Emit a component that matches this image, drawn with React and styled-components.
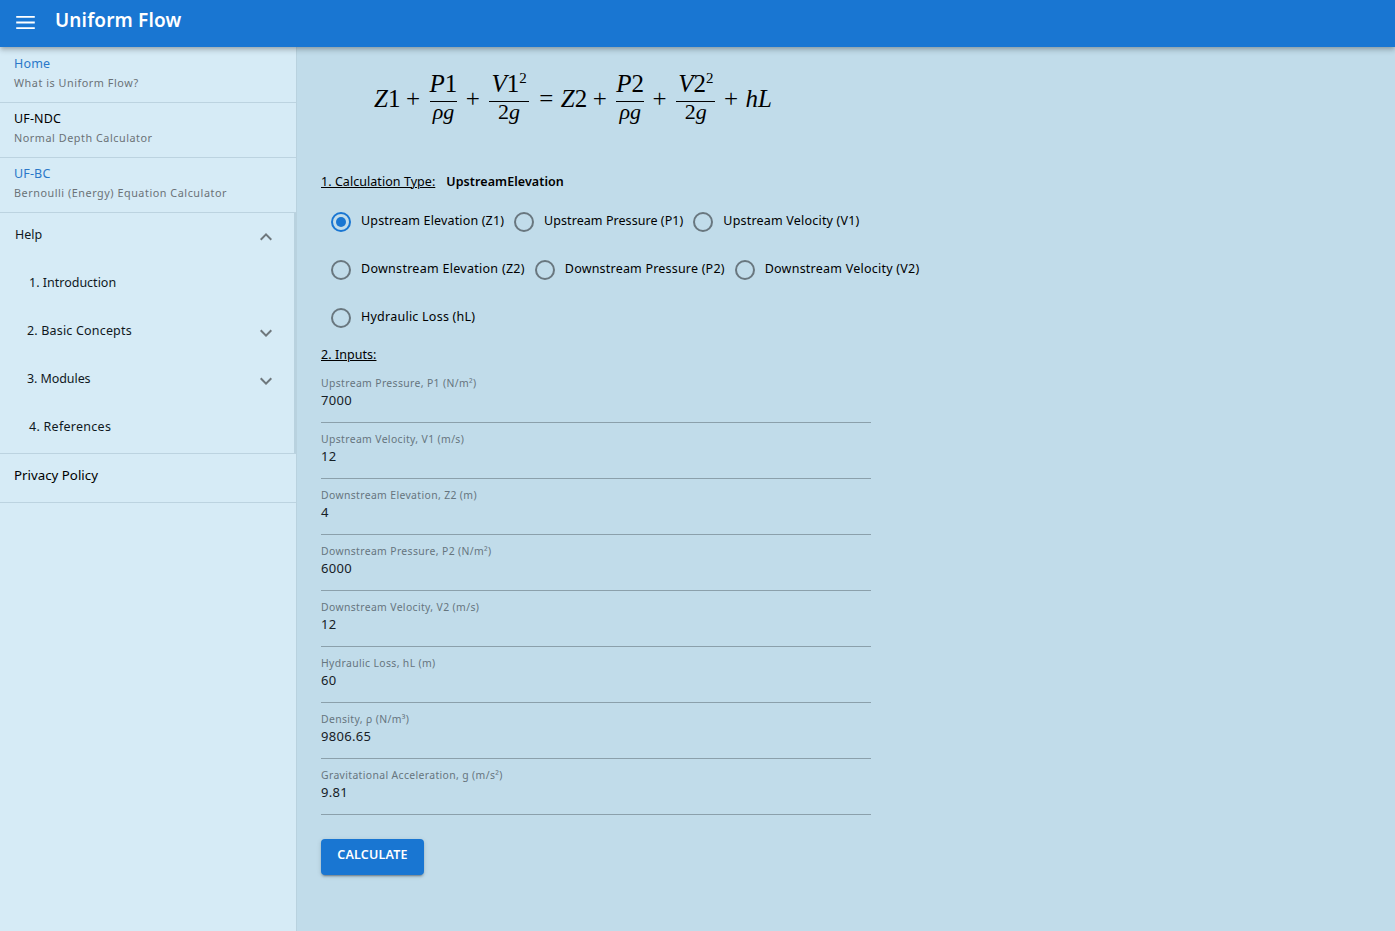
import React from "react";
import styled, { createGlobalStyle } from "styled-components";
import { MdExpandLess, MdExpandMore } from "react-icons/md";

const GlobalStyle = createGlobalStyle`
  html, body {
    margin: 0;
    padding: 0;
    height: 100%;
    background-color: #c1dcea;
  }
  body {
    font-family: "Noto Sans", "Open Sans", sans-serif;
    color: #000;
  }
`;

const Page = styled.div`
  display: flex;
  flex-direction: column;
  height: 931px;
  overflow: hidden;
`;

const AppBar = styled.header`
  display: flex;
  align-items: center;
  flex: 0 0 47px;
  height: 47px;
  padding-left: 16px;
  background-color: #1976d2;
  box-shadow: 0 2px 4px -1px rgba(0, 0, 0, 0.2), 0 4px 5px 0 rgba(0, 0, 0, 0.14);
  position: relative;
  z-index: 2;
`;

const MenuIcon = styled.svg`
  width: 19px;
  height: 13px;
  margin-top: -3px;
`;

const Title = styled.h1`
  margin: 0 0 7px 20px;
  font-size: 19px;
  font-weight: 600;
  color: #fff;
  letter-spacing: 0.15px;
`;

const Body = styled.div`
  display: flex;
  flex: 1;
  min-height: 0;
`;

const Sidebar = styled.nav`
  flex: 0 0 297px;
  box-sizing: border-box;
  background-color: #d6ebf6;
  border-right: 1px solid #b9d2df;
`;

const NavItem = styled.a`
  display: block;
  box-sizing: border-box;
  height: ${(p) => (p.$first ? "56px" : "55px")};
  padding: ${(p) => (p.$first ? "8px" : "7px")} 14px 0;
  border-bottom: 1px solid #bcd3e0;
`;

const NavTitle = styled.div`
  font-size: 12.5px;
  line-height: 17px;
  letter-spacing: 0.15px;
  color: ${(p) => (p.$link ? "#2a78c9" : "#000")};
`;

const NavSub = styled.div`
  margin-top: 3px;
  font-size: 10.8px;
  line-height: 15px;
  letter-spacing: 0.54px;
  color: #6b7277;
`;

const HelpGroup = styled.div`
  box-sizing: border-box;
  height: 241px;
  border-bottom: 1px solid #bcd3e0;
  border-right: 2px solid #b9d2df;
`;

const HelpRow = styled.div`
  display: flex;
  align-items: center;
  justify-content: space-between;
  box-sizing: border-box;
  height: 48px;
  padding: 0 16px 6px ${(p) => p.$indent}px;
  font-size: 12.5px;
  letter-spacing: ${(p) => p.$spacing || 0}px;
  color: #10181d;
`;

const Chevron = styled.span`
  display: flex;
  margin-top: 6px;
  color: #6e777c;
`;

const PrivacyItem = styled.a`
  display: flex;
  align-items: center;
  box-sizing: border-box;
  height: 49px;
  padding: 0 14px 7px;
  font-size: 13.3px;
  border-bottom: 1px solid #bcd3e0;
`;

const Main = styled.main`
  flex: 1;
  padding: 0 24px;
`;

const Equation = styled.div`
  display: flex;
  align-items: center;
  height: 106px;
  padding: 0 0 2px 53px;
  box-sizing: border-box;
  font-family: "Liberation Serif", serif;
  font-size: 25px;
  color: #000;
`;

const MathVar = styled.i`
  font-style: italic;
  margin-left: ${(p) => p.$gap || 0}px;
`;

const MathOp = styled.span`
  margin: ${(p) => (p.$equals ? "0 7.5px" : "0 6.5px 0 5.5px")};
`;

const Fraction = styled.span`
  display: inline-flex;
  flex-direction: column;
  align-items: center;
  margin: 0 3px;
`;

const Numerator = styled.span`
  padding: 0 ${(p) => (p.$wide ? 2 : 0)}px 3px;
  line-height: 29px;
  border-bottom: 1px solid #000;
  white-space: nowrap;
`;

const Denominator = styled.span`
  margin-bottom: 8px;
  line-height: 19px;
  font-size: 22px;
`;

const Sup = styled.sup`
  font-size: 15px;
  line-height: 0;
`;

const SectionRow = styled.div`
  display: flex;
  align-items: center;
  height: 20px;
  margin-top: ${(p) => p.$top}px;
  font-size: 12.5px;
`;

const SectionLabel = styled.span`
  text-decoration: underline;
  margin-right: 11px;
  letter-spacing: 0.05px;
`;

const SectionValue = styled.span`
  font-weight: 600;
  letter-spacing: 0.08px;
`;

const RadioRows = styled.div`
  margin: 6px 0 0 -1px;
`;

const RadioRow = styled.div`
  display: flex;
  height: 48px;
  align-items: center;
`;

const RadioLabel = styled.label`
  display: inline-flex;
  align-items: center;
  font-size: 12.5px;
  white-space: nowrap;
`;

const RadioBox = styled.span`
  display: flex;
  align-items: center;
  justify-content: center;
  flex: 0 0 42px;
  height: 42px;
  margin-top: 2px;
`;

const RadioCircle = styled.span`
  display: flex;
  align-items: center;
  justify-content: center;
  box-sizing: border-box;
  width: 20px;
  height: 20px;
  border-radius: 50%;
  border: 2px solid ${(p) => (p.$checked ? "#1976d2" : "#69777f")};
  &::after {
    content: "";
    display: ${(p) => (p.$checked ? "block" : "none")};
    width: 10px;
    height: 10px;
    border-radius: 50%;
    background-color: #1976d2;
  }
`;

const RadioText = styled.span`
  margin: -2px -1px 0 -1px;
  letter-spacing: ${(p) => p.$spacing}px;
`;

const Fields = styled.div`
  width: 550px;
  margin-top: 3px;
`;

const Field = styled.div`
  box-sizing: border-box;
  height: 56px;
  padding-top: 9px;
  border-bottom: 1px solid #8ba0ab;
`;

const FieldLabel = styled.div`
  font-size: 10.4px;
  line-height: 15px;
  letter-spacing: 0.37px;
  color: #66757e;
`;

const FieldValue = styled.div`
  font-size: 13px;
  line-height: 20px;
  margin-top: -1px;
  letter-spacing: 0.3px;
  color: #162026;
`;

const CalcButton = styled.button`
  display: block;
  width: 103px;
  height: 36px;
  margin-top: 24px;
  padding: 0 0 6px;
  border: 0;
  border-radius: 4px;
  background-color: #1976d2;
  color: #fff;
  font-family: inherit;
  font-size: 12.5px;
  font-weight: 600;
  letter-spacing: 0.2px;
  box-shadow: 0 3px 1px -2px rgba(0, 0, 0, 0.2), 0 2px 2px 0 rgba(0, 0, 0, 0.14),
    0 1px 5px 0 rgba(0, 0, 0, 0.12);
`;

const radioRows = [
  [
    { label: "Upstream Elevation (Z1)", spacing: 0.15 },
    { label: "Upstream Pressure (P1)", spacing: 0.06 },
    { label: "Upstream Velocity (V1)", spacing: 0.2 },
  ],
  [
    { label: "Downstream Elevation (Z2)", spacing: 0.28 },
    { label: "Downstream Pressure (P2)", spacing: 0.2 },
    { label: "Downstream Velocity (V2)", spacing: 0.24 },
  ],
  [{ label: "Hydraulic Loss (hL)", spacing: 0.24 }],
];

const fields = [
  ["Upstream Pressure, P1 (N/m²)", "7000"],
  ["Upstream Velocity, V1 (m/s)", "12"],
  ["Downstream Elevation, Z2 (m)", "4"],
  ["Downstream Pressure, P2 (N/m²)", "6000"],
  ["Downstream Velocity, V2 (m/s)", "12"],
  ["Hydraulic Loss, hL (m)", "60"],
  ["Density, ρ (N/m³)", "9806.65"],
  ["Gravitational Acceleration, g (m/s²)", "9.81"],
];

function PressureFrac({ name }) {
  return (
    <Fraction>
      <Numerator>
        <MathVar>P</MathVar>
        {name}
      </Numerator>
      <Denominator>
        <MathVar>ρg</MathVar>
      </Denominator>
    </Fraction>
  );
}

function VelocityFrac({ name }) {
  return (
    <Fraction>
      <Numerator $wide>
        <MathVar>V</MathVar>
        {name}
        <Sup>2</Sup>
      </Numerator>
      <Denominator>
        2<MathVar>g</MathVar>
      </Denominator>
    </Fraction>
  );
}

export default function App() {
  return (
    <Page>
      <GlobalStyle />
      <AppBar>
        <MenuIcon viewBox="0 0 20 14">
          <path d="M0 0h20v2H0zM0 6h20v2H0zM0 12h20v2H0z" fill="#fff" />
        </MenuIcon>
        <Title>Uniform Flow</Title>
      </AppBar>
      <Body>
        <Sidebar>
          <NavItem $first>
            <NavTitle $link>Home</NavTitle>
            <NavSub>What is Uniform Flow?</NavSub>
          </NavItem>
          <NavItem>
            <NavTitle>UF-NDC</NavTitle>
            <NavSub>Normal Depth Calculator</NavSub>
          </NavItem>
          <NavItem>
            <NavTitle $link>UF-BC</NavTitle>
            <NavSub>Bernoulli (Energy) Equation Calculator</NavSub>
          </NavItem>
          <HelpGroup>
            <HelpRow $indent={15}>
              Help
              <Chevron>
                <MdExpandLess size={24} />
              </Chevron>
            </HelpRow>
            <HelpRow $indent={29}>1. Introduction</HelpRow>
            <HelpRow $indent={27} $spacing={0.18}>
              2. Basic Concepts
              <Chevron>
                <MdExpandMore size={24} />
              </Chevron>
            </HelpRow>
            <HelpRow $indent={27} $spacing={-0.08}>
              3. Modules
              <Chevron>
                <MdExpandMore size={24} />
              </Chevron>
            </HelpRow>
            <HelpRow $indent={29} $spacing={0.27}>
              4. References
            </HelpRow>
          </HelpGroup>
          <PrivacyItem>Privacy Policy</PrivacyItem>
        </Sidebar>
        <Main>
          <Equation>
            <MathVar>Z</MathVar>1<MathOp>+</MathOp>
            <PressureFrac name="1" />
            <MathOp>+</MathOp>
            <VelocityFrac name="1" />
            <MathOp $equals>=</MathOp>
            <MathVar>Z</MathVar>2<MathOp>+</MathOp>
            <PressureFrac name="2" />
            <MathOp>+</MathOp>
            <VelocityFrac name="2" />
            <MathOp>+</MathOp>
            <MathVar $gap={1}>hL</MathVar>
          </Equation>
          <SectionRow $top={18}>
            <SectionLabel>1. Calculation Type:</SectionLabel>
            <SectionValue>UpstreamElevation</SectionValue>
          </SectionRow>
          <RadioRows>
            {radioRows.map((row) => (
              <RadioRow key={row[0].label}>
                {row.map(({ label, spacing }) => (
                  <RadioLabel key={label}>
                    <RadioBox>
                      <RadioCircle $checked={label === "Upstream Elevation (Z1)"} />
                    </RadioBox>
                    <RadioText $spacing={spacing}>{label}</RadioText>
                  </RadioLabel>
                ))}
              </RadioRow>
            ))}
          </RadioRows>
          <SectionRow $top={3}>
            <SectionLabel>2. Inputs:</SectionLabel>
          </SectionRow>
          <Fields>
            {fields.map(([label, value]) => (
              <Field key={label}>
                <FieldLabel>{label}</FieldLabel>
                <FieldValue>{value}</FieldValue>
              </Field>
            ))}
          </Fields>
          <CalcButton>CALCULATE</CalcButton>
        </Main>
      </Body>
    </Page>
  );
}
